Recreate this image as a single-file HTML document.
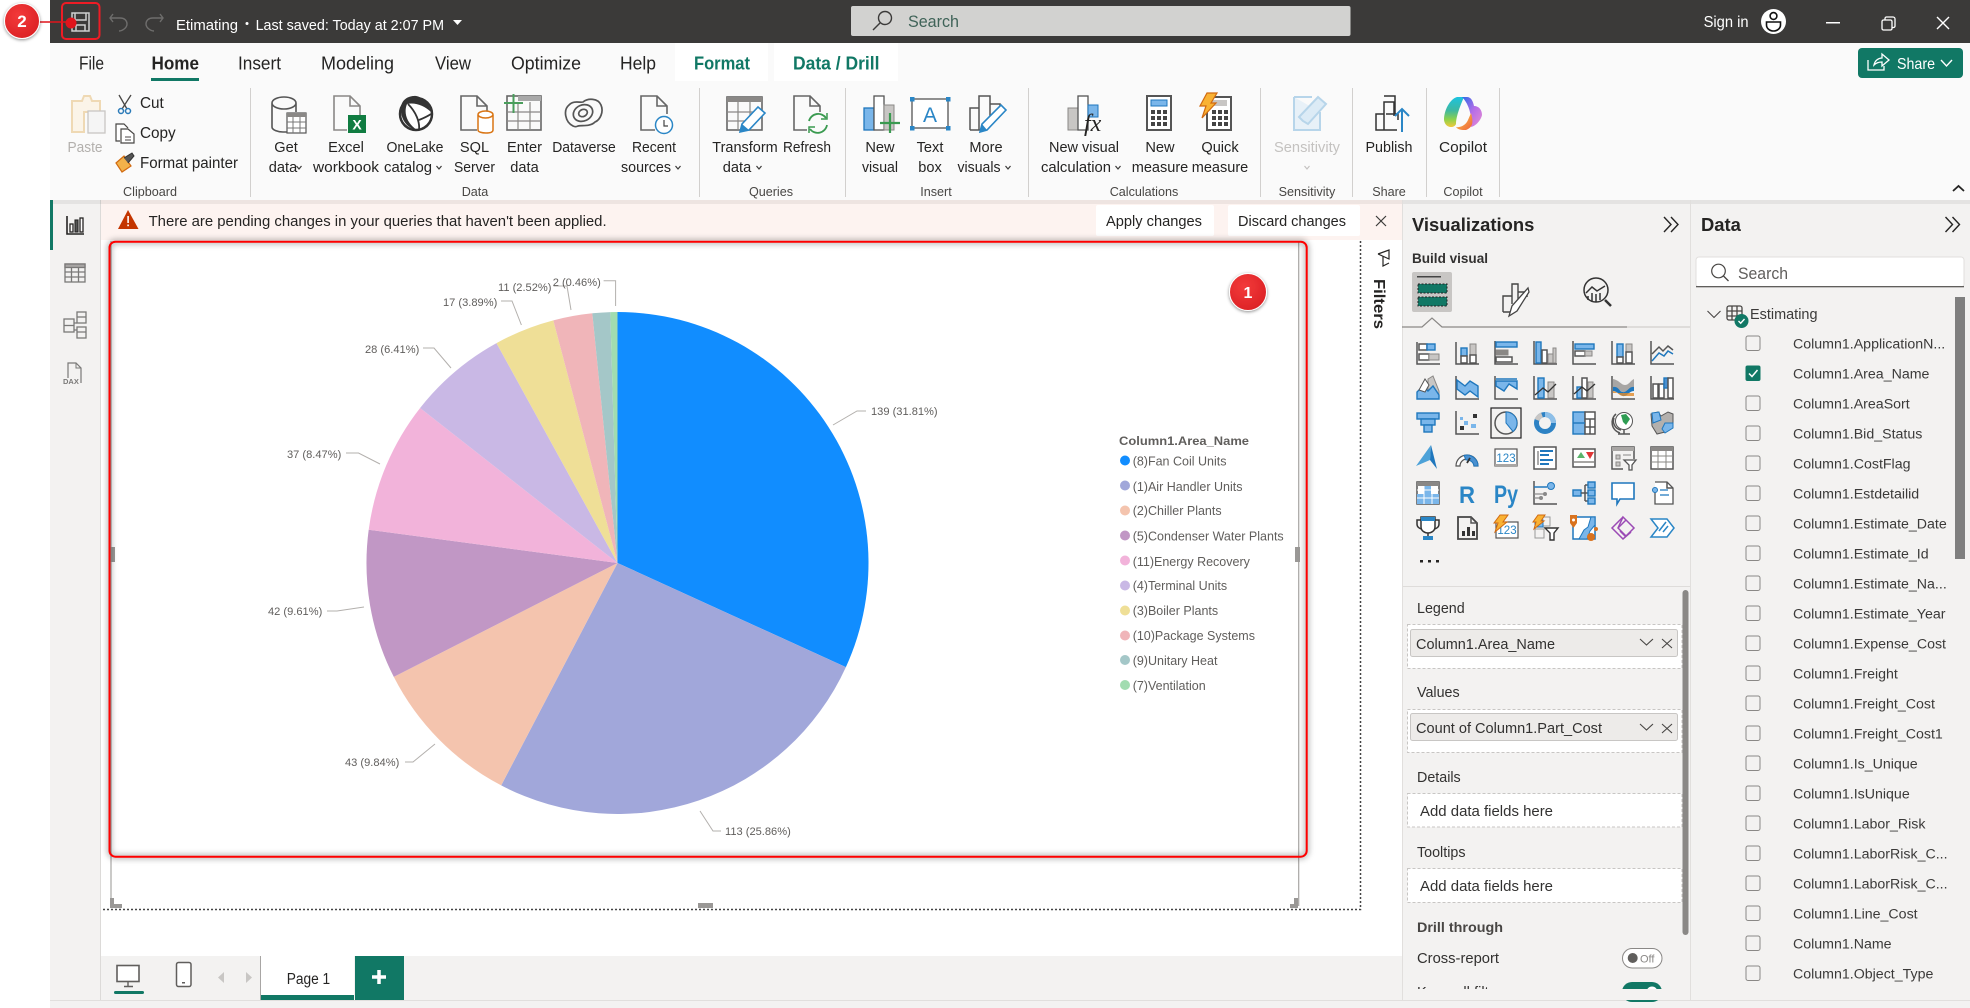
<!DOCTYPE html>
<html lang="en"><head><meta charset="utf-8"><title>Power BI Desktop</title>
<style>
html,body{margin:0;padding:0;background:#fff;width:1970px;height:1008px;overflow:hidden}
svg{display:block}
text{font-family:"Liberation Sans",sans-serif;fill:#252423}
.t{font-size:18px}
.r{font-size:14.6px;text-anchor:middle;fill:#252423}
.g{font-size:12.6px;text-anchor:middle;fill:#484644}
.s{font-size:15.3px}
.d{font-size:14.2px;fill:#3b3a39}
.l{font-size:11.1px;fill:#605e5c}
.e{font-size:12.5px;fill:#605e5c}
.w{font-size:14.3px;fill:#323130}
.k{fill:none;stroke:#555;stroke-width:1.5}
.kw{fill:#fff;stroke:#555;stroke-width:1.5}
.b{fill:#7ab6ea;stroke:#1f77bd;stroke-width:1.4}
.bl{fill:none;stroke:#1f77bd;stroke-width:1.5}
.y{fill:#c8c6c4;stroke:#8a8886;stroke-width:1}
.ld{fill:none;stroke:#b3b0ad;stroke-width:1}
.ch{fill:none;stroke:#3b3a39;stroke-width:1.2}
</style></head>
<body>
<svg width="1970" height="1008" viewBox="0 0 1970 1008" xmlns="http://www.w3.org/2000/svg">
<defs>
<linearGradient id="cp1" x1="0" y1="0" x2="0" y2="1"><stop offset="0" stop-color="#1cc3e0"/><stop offset=".45" stop-color="#3fb8a0"/><stop offset=".75" stop-color="#8fd24a"/><stop offset="1" stop-color="#f2c83c"/></linearGradient>
<linearGradient id="cp2" x1="0" y1="0" x2="1" y2="1"><stop offset="0" stop-color="#2b6be8"/><stop offset=".5" stop-color="#b46ee8"/><stop offset="1" stop-color="#e98bd0"/></linearGradient>
<linearGradient id="cp3" x1="0" y1="0" x2="1" y2="1"><stop offset="0" stop-color="#f7d04a"/><stop offset="1" stop-color="#f0603a"/></linearGradient>
<radialGradient id="rb" cx=".4" cy=".35" r=".8"><stop offset="0" stop-color="#f33a3a"/><stop offset="1" stop-color="#d81e22"/></radialGradient>
<filter id="sh" x="-30%" y="-30%" width="160%" height="160%"><feDropShadow dx="0" dy="1" stdDeviation="1.5" flood-opacity=".45"/></filter>
<filter id="bl" x="-5%" y="-5%" width="110%" height="110%"><feGaussianBlur stdDeviation="3"/></filter>
</defs>

<!-- base -->
<rect width="1970" height="1008" fill="#fff"/>
<rect x="50" y="0" width="1920" height="43" fill="#3b3a39"/>
<rect x="50" y="200" width="1920" height="808" fill="#f3f2f1"/>

<!-- canvas -->
<rect x="101" y="240" width="1260" height="716" fill="#fff"/>
<rect x="1361" y="240" width="41" height="760" fill="#fff"/>
<rect x="100" y="200" width="1" height="800" fill="#dcdad8"/>
<rect x="101" y="200" width="1301" height="40" fill="#fdf3f0"/>

<!-- ribbon -->
<rect x="50" y="43" width="1920" height="157" fill="#fafafa"/>
<rect x="50" y="200" width="1920" height="4" fill="#000" opacity=".06"/>
<rect x="675" y="43" width="93" height="38" fill="#fff"/>
<rect x="774" y="43" width="124" height="38" fill="#fff"/>

<!-- title bar -->
<g fill="none" stroke="#cfcfcf" stroke-width="1.5">
<path d="M72 13H89V31H72Z"/><path d="M75 13V20H86V13"/><path d="M76 31V25H85V31"/>
</g>
<path d="M113 14L110 18L113 22M110 18H120C125 18 127 21 127 24C127 28 122 31 119 31" fill="none" stroke="#6e6d6c" stroke-width="1.4"/>
<path d="M160 14L163 18L160 22M163 18H153C148 18 146 21 146 24C146 28 151 31 154 31" fill="none" stroke="#6e6d6c" stroke-width="1.4"/>
<text x="176" y="30" font-size="14.4" style="fill:#fff" textLength="62" lengthAdjust="spacingAndGlyphs">Etimating</text>
<circle cx="247" cy="23.5" r="1.5" fill="#fff"/>
<text x="255.6" y="30" font-size="14.4" style="fill:#fff" textLength="188.4" lengthAdjust="spacingAndGlyphs">Last saved: Today at 2:07 PM</text>
<path d="M453 20H462L457.5 25Z" fill="#fff"/>
<rect x="851" y="6" width="499.5" height="30" rx="2" fill="#d2d2d0"/>
<circle cx="885" cy="18" r="6.5" fill="none" stroke="#3b3a39" stroke-width="1.4"/><path d="M880 23L873 30" stroke="#3b3a39" stroke-width="1.4"/>
<text x="908" y="27" font-size="17" style="fill:#3f6358" textLength="51" lengthAdjust="spacingAndGlyphs">Search</text>
<text x="1703.6" y="27" font-size="15.4" style="fill:#fff" textLength="45" lengthAdjust="spacingAndGlyphs">Sign in</text>
<circle cx="1773.5" cy="21.5" r="12.5" fill="#fff"/>
<circle cx="1773.5" cy="16" r="3.4" fill="none" stroke="#111" stroke-width="1.6"/>
<path d="M1766.5 22H1780.5V25A7 6 0 0 1 1766.5 25Z" fill="none" stroke="#111" stroke-width="1.6"/>
<rect x="1826" y="22" width="14" height="1.5" fill="#fff"/>
<path d="M1882 21.5a1.5 1.5 0 0 1 1.5-1.5h7a1.5 1.5 0 0 1 1.5 1.5v7a1.5 1.5 0 0 1-1.5 1.5h-7a1.5 1.5 0 0 1-1.5-1.5ZM1885 20v-1.5a1.5 1.5 0 0 1 1.5-1.5h6.5a2 2 0 0 1 2 2v7a1.5 1.5 0 0 1-1.5 1.5H1892" fill="none" stroke="#fff" stroke-width="1.3"/>
<path d="M1937 17L1949 29M1949 17L1937 29" stroke="#fff" stroke-width="1.4"/>

<!-- annotation 2 -->
<rect x="62" y="3" width="37.5" height="36" rx="4" fill="none" stroke="#ee1c25" stroke-width="2"/>
<path d="M30 22H72" stroke="#e0141c" stroke-width="1.6"/>
<circle cx="71" cy="23" r="5.5" fill="#e0141c"/>
<circle cx="22" cy="21" r="17.5" fill="url(#rb)" stroke="#fff" stroke-width="1" filter="url(#sh)"/>
<text x="22" y="27" font-size="17" font-weight="bold" text-anchor="middle" style="fill:#fff">2</text>

<!-- tabs -->
<text class="t" x="79" y="69.500" textLength="25" lengthAdjust="spacingAndGlyphs">File</text>
<text class="t" x="151.500" y="69.500" font-weight="bold" textLength="47.500" lengthAdjust="spacingAndGlyphs">Home</text>
<rect x="151" y="78" width="48" height="3" fill="#117865"/>
<text class="t" x="238" y="69.500" textLength="43" lengthAdjust="spacingAndGlyphs">Insert</text>
<text class="t" x="321" y="69.500" textLength="73" lengthAdjust="spacingAndGlyphs">Modeling</text>
<text class="t" x="435" y="69.500" textLength="36" lengthAdjust="spacingAndGlyphs">View</text>
<text class="t" x="511" y="69.500" textLength="70" lengthAdjust="spacingAndGlyphs">Optimize</text>
<text class="t" x="620" y="69.500" textLength="36" lengthAdjust="spacingAndGlyphs">Help</text>
<text class="t" x="694" y="69.500" font-weight="bold" style="fill:#117865" textLength="56" lengthAdjust="spacingAndGlyphs">Format</text>
<text class="t" x="793" y="69.500" font-weight="bold" style="fill:#117865" textLength="86.500" lengthAdjust="spacingAndGlyphs">Data / Drill</text>

<!-- share -->
<rect x="1858" y="48" width="105" height="30" rx="4" fill="#117865"/>
<path d="M1868 60V70H1884V66M1874 65C1875 60 1879 58 1882 58V54L1889 60L1882 66V62C1878 62 1876 63 1874 65Z" fill="none" stroke="#fff" stroke-width="1.3"/>
<text x="1897" y="69" font-size="15.6" style="fill:#fff" textLength="38" lengthAdjust="spacingAndGlyphs">Share</text>
<path d="M1941 60L1946.5 66L1952 60" fill="none" stroke="#fff" stroke-width="1.4"/>

<!-- separators -->
<g fill="#d2d0ce">
<rect x="250" y="88" width="1" height="109"/><rect x="699" y="88" width="1" height="109"/><rect x="845" y="88" width="1" height="109"/><rect x="1028" y="88" width="1" height="109"/><rect x="1260" y="88" width="1" height="109"/><rect x="1352" y="88" width="1" height="109"/><rect x="1426" y="88" width="1" height="109"/><rect x="1499" y="88" width="1" height="109"/>
</g>
<path d="M1953 191L1958.5 186L1964 191" fill="none" stroke="#252423" stroke-width="1.8"/>

<!-- ribbon labels -->
<text class="r" x="85" y="152" style="fill:#b3b0ad" textLength="35" lengthAdjust="spacingAndGlyphs">Paste</text>
<text class="s" x="140" y="108">Cut</text>
<text class="s" x="140" y="138">Copy</text>
<text class="s" x="140" y="168" textLength="98" lengthAdjust="spacingAndGlyphs">Format painter</text>
<text class="r" x="286" y="152">Get</text><text class="r" x="283" y="172">data</text>
<text class="r" x="346" y="152">Excel</text><text class="r" x="346" y="172" textLength="66" lengthAdjust="spacingAndGlyphs">workbook</text>
<text class="r" x="415" y="152" textLength="57" lengthAdjust="spacingAndGlyphs">OneLake</text><text class="r" x="408" y="172" textLength="48" lengthAdjust="spacingAndGlyphs">catalog</text>
<text class="r" x="474.500" y="152">SQL</text><text class="r" x="474.500" y="172" textLength="41" lengthAdjust="spacingAndGlyphs">Server</text>
<text class="r" x="524.500" y="152">Enter</text><text class="r" x="524.500" y="172">data</text>
<text class="r" x="584" y="152" textLength="63.500" lengthAdjust="spacingAndGlyphs">Dataverse</text>
<text class="r" x="654" y="152" textLength="44" lengthAdjust="spacingAndGlyphs">Recent</text><text class="r" x="646" y="172" textLength="50" lengthAdjust="spacingAndGlyphs">sources</text>
<text class="r" x="745" y="152" textLength="65.500" lengthAdjust="spacingAndGlyphs">Transform</text><text class="r" x="737" y="172">data</text>
<text class="r" x="807" y="152" textLength="48" lengthAdjust="spacingAndGlyphs">Refresh</text>
<text class="r" x="880" y="152">New</text><text class="r" x="880" y="172" textLength="36" lengthAdjust="spacingAndGlyphs">visual</text>
<text class="r" x="930" y="152">Text</text><text class="r" x="930" y="172">box</text>
<text class="r" x="986" y="152">More</text><text class="r" x="979" y="172" textLength="43" lengthAdjust="spacingAndGlyphs">visuals</text>
<text class="r" x="1084" y="152" textLength="70" lengthAdjust="spacingAndGlyphs">New visual</text><text class="r" x="1076" y="172" textLength="70" lengthAdjust="spacingAndGlyphs">calculation</text>
<text class="r" x="1160" y="152">New</text><text class="r" x="1160" y="172" textLength="56.500" lengthAdjust="spacingAndGlyphs">measure</text>
<text class="r" x="1220" y="152">Quick</text><text class="r" x="1220" y="172" textLength="56.500" lengthAdjust="spacingAndGlyphs">measure</text>
<text class="r" x="1307" y="152" style="fill:#c4c2c0" textLength="66" lengthAdjust="spacingAndGlyphs">Sensitivity</text>
<text class="r" x="1389" y="152" textLength="47" lengthAdjust="spacingAndGlyphs">Publish</text>
<text class="r" x="1463" y="152" textLength="48" lengthAdjust="spacingAndGlyphs">Copilot</text>
<path class="ch" d="M296.500 166L299 169L301.500 166M436.500 166L439 169L441.500 166M675.500 166L678 169L680.500 166M756.500 166L759 169L761.500 166M1005.500 166L1008 169L1010.500 166M1115.500 166L1118 169L1120.500 166"/>
<path d="M1304.500 166L1307 169L1309.500 166" fill="none" stroke="#c4c2c0" stroke-width="1.2"/>
<text class="g" x="150" y="196">Clipboard</text>
<text class="g" x="475" y="196">Data</text>
<text class="g" x="771" y="196">Queries</text>
<text class="g" x="936" y="196">Insert</text>
<text class="g" x="1144" y="196">Calculations</text>
<text class="g" x="1307" y="196">Sensitivity</text>
<text class="g" x="1389" y="196">Share</text>
<text class="g" x="1463" y="196">Copilot</text>

<!-- ribbon icons -->
<!-- paste -->
<path d="M72 101H82L84 96H90L92 101H100V112H84V132H72Z" fill="#fbf4e8" stroke="#efd9b4" stroke-width="2"/>
<rect x="88" y="111" width="17" height="22" fill="#f5f5f5" stroke="#c8c6c4" stroke-width="1.3"/>
<!-- cut -->
<path d="M119 95L127 109M131 95L122 109" stroke="#484644" stroke-width="1.3" fill="none"/>
<circle cx="121" cy="111" r="2.500" fill="none" stroke="#2a7ab8" stroke-width="1.500"/><circle cx="128" cy="111" r="2.500" fill="none" stroke="#2a7ab8" stroke-width="1.500"/>
<!-- copy -->
<path d="M120 141H116V124H124L128 128M121 143V129H128L134 134V143Z" fill="#fff" stroke="#484644" stroke-width="1.2"/><path d="M125 137H131M125 140H131" stroke="#484644"/>
<!-- format painter -->
<path d="M116 163L124 156L131 166L122 172Z" fill="#f3b24a" stroke="#d16a10" stroke-width="1.2"/>
<path d="M124 158L132 153L134 156L128 163" fill="#555" stroke="#333"/>
<!-- get data -->
<path d="M272 103V127C272 130 278 132 283 132H287M296 112V103M272 103A12 6 0 0 1 296 103A12 6 0 0 1 272 103Z" fill="none" stroke="#555" stroke-width="1.6"/>
<rect x="287" y="113" width="19" height="20" fill="#fff" stroke="#555" stroke-width="1.2"/><rect x="287" y="113" width="19" height="4" fill="#8a8886"/><path d="M293 117V133M300 117V133M287 122H306M287 128H306" stroke="#777" stroke-width="1"/>
<!-- excel -->
<path d="M347 130H334V96H350L360 106V115M350 96V106H360" fill="none" stroke="#8a8886" stroke-width="1.6"/>
<rect x="348" y="115" width="18" height="18" fill="#107c41"/><text x="357" y="129.500" font-size="14" font-weight="bold" text-anchor="middle" style="fill:#fff">X</text>
<!-- onelake -->
<circle cx="416" cy="114" r="16" fill="#fff" stroke="#333" stroke-width="2.500"/>
<path d="M401 107C402 99 409 96 414 96C420 95 429 103 431 112C425 106 415 102 407 104C403 114 408 124 417 130C406 128 400 118 401 107Z" fill="#333"/><path d="M408 104C416 112 420 122 419 130M419 120C424 118 428 116 431 114" fill="none" stroke="#333" stroke-width="1.800"/>
<!-- sql -->
<path d="M477 130H461V96H477L487 106V111M477 96V106H487" fill="none" stroke="#666" stroke-width="1.600"/>
<path d="M478 115V130C478 132 482 133 486 133C490 133 493 132 493 130V115" fill="#fff" stroke="#d97514" stroke-width="1.500"/><ellipse cx="485.500" cy="114.500" rx="7.500" ry="3.500" fill="#fff" stroke="#d97514" stroke-width="1.500"/>
<!-- enter data -->
<rect x="507" y="96" width="34" height="34" fill="none" stroke="#666" stroke-width="1.600"/><rect x="518" y="96" width="23" height="5" fill="#a8a8a8"/>
<path d="M507 112H541M507 121H541M518 102V130M530 102V130" stroke="#8a8886" stroke-width="1.200"/>
<path d="M504 103H523M513.500 94V113" stroke="#4a9e5c" stroke-width="2"/>
<!-- dataverse -->
<g fill="none" stroke="#555" stroke-width="1.700"><path d="M573 126C565 122 563 110 569 105C574 100 580 103 583 102C588 98 598 98 601 105C604 112 600 120 595 122C590 127 582 125 578 126C576 127 575 127 573 126Z"/><ellipse cx="583" cy="113" rx="10" ry="8" transform="rotate(-25 583 113)"/><ellipse cx="583" cy="113" rx="4.500" ry="3.500" transform="rotate(-25 583 113)"/></g>
<!-- recent -->
<path d="M655 130H641V96H657L667 106V114M657 96V106H667" fill="none" stroke="#666" stroke-width="1.600"/>
<circle cx="664" cy="125" r="8.500" fill="#fff" stroke="#2a86c6" stroke-width="1.500"/><path d="M664 120V126H668" fill="none" stroke="#444" stroke-width="1.200"/>
<!-- transform -->
<rect x="727" y="97" width="35" height="33" fill="none" stroke="#666" stroke-width="1.600"/><rect x="727" y="97" width="35" height="5" fill="#8a8886"/><path d="M727 112H762M727 121H752M738 102V130M750 102V125" stroke="#8a8886" stroke-width="1.200"/>
<path d="M740 132L742 124L758 107L765 113L749 130Z" fill="#fff" stroke="#2a86c6" stroke-width="1.600"/><path d="M740 132L742 124L749 130Z" fill="#2a86c6"/>
<!-- refresh -->
<path d="M807 130H794V96H810L820 106V112M810 96V106H820" fill="none" stroke="#666" stroke-width="1.600"/>
<path d="M809 121A9.500 9.500 0 0 1 826 118M827 125A9.500 9.500 0 0 1 810 129" fill="none" stroke="#3a9a50" stroke-width="1.800"/><path d="M827 113V119H821M809 133V127H815" fill="none" stroke="#3a9a50" stroke-width="1.500"/>
<!-- new visual -->
<rect x="864" y="108" width="10" height="22" fill="#7ab6ea" stroke="#1f77bd" stroke-width="1.300"/>
<rect x="874" y="96" width="10" height="34" fill="#fff" stroke="#555" stroke-width="1.300"/><rect x="884" y="105" width="10" height="25" fill="#c8c6c4" stroke="#8a8886"/>
<path d="M880 123H900M890 113V133" stroke="#3a9a50" stroke-width="2.200"/>
<!-- text box -->
<rect x="912" y="99" width="36" height="29" fill="#fff" stroke="#555" stroke-width="1.300"/>
<g fill="#2a86c6"><rect x="910" y="97" width="4.500" height="4.500"/><rect x="946" y="97" width="4.500" height="4.500"/><rect x="910" y="126" width="4.500" height="4.500"/><rect x="946" y="126" width="4.500" height="4.500"/></g>
<text x="930" y="122" font-size="21" text-anchor="middle" style="fill:#2a86c6">A</text>
<!-- more visuals -->
<path d="M970 130V108H979V96H990V104H1000V113M979 108V130H970M979 130H985M990 104V118" fill="none" stroke="#555" stroke-width="1.500"/>
<path d="M980 132L982 124L1001 105L1006 110L987 130Z" fill="#fff" stroke="#2a86c6" stroke-width="1.600"/><path d="M980 132L982 124L987 130Z" fill="#2a86c6"/>
<!-- new visual calc -->
<rect x="1068" y="108" width="10" height="22" fill="#c8c6c4" stroke="#8a8886"/><rect x="1078" y="96" width="10" height="34" fill="#fff" stroke="#555" stroke-width="1.300"/><rect x="1088" y="105" width="10" height="12" fill="#7ab6ea" stroke="#1f77bd"/>
<text x="1084" y="131" font-style="italic" font-size="24" style="font-family:'Liberation Serif',serif;fill:#252423">fx</text>
<!-- new measure -->
<rect x="1147" y="96" width="24" height="34" fill="#fff" stroke="#555" stroke-width="2"/><rect x="1151" y="100" width="16" height="6" fill="#7ab6ea" stroke="#1f77bd"/>
<g fill="#444"><rect x="1151" y="110" width="4" height="4"/><rect x="1157" y="110" width="4" height="4"/><rect x="1163" y="110" width="4" height="4"/><rect x="1151" y="116" width="4" height="4"/><rect x="1157" y="116" width="4" height="4"/><rect x="1163" y="116" width="4" height="4"/><rect x="1151" y="122" width="4" height="4"/><rect x="1157" y="122" width="4" height="4"/><rect x="1163" y="122" width="4" height="4"/></g>
<!-- quick measure -->
<rect x="1207" y="97" width="24" height="33" fill="#fff" stroke="#555" stroke-width="2"/><rect x="1211" y="100" width="16" height="6" fill="#c8c6c4"/>
<g fill="#444"><rect x="1212" y="110" width="4" height="4"/><rect x="1218" y="110" width="4" height="4"/><rect x="1224" y="110" width="4" height="4"/><rect x="1212" y="116" width="4" height="4"/><rect x="1218" y="116" width="4" height="4"/><rect x="1224" y="116" width="4" height="4"/><rect x="1212" y="122" width="4" height="4"/><rect x="1218" y="122" width="4" height="4"/><rect x="1224" y="122" width="4" height="4"/></g>
<path d="M1207 93H1217L1211 103H1216L1202 118L1206 106H1200Z" fill="#f9b233" stroke="#d16a10" stroke-width="1.200"/>
<!-- sensitivity -->
<path d="M1294 97H1312M1294 97V130H1320V112" fill="#e8f1f8" stroke="#b7d5ea" stroke-width="2"/>
<path d="M1303 121L1299 117L1318 97L1326 104L1308 124Z" fill="#dcebf6" stroke="#b7d5ea" stroke-width="2"/>
<!-- publish -->
<path d="M1378 130H1376V114H1384V102H1394V116M1384 114V130H1378M1384 96H1395V114M1386 114H1398V120M1384 130H1397" fill="none" stroke="#333" stroke-width="1.500"/>
<path d="M1402 132V109M1395 116L1402 109L1409 116" fill="none" stroke="#2a86c6" stroke-width="2"/>
<!-- copilot -->
<path d="M1444 120C1444 110 1450 99 1457 97H1464C1461 104 1456 116 1456 124C1454 129 1445 128 1444 120Z" fill="url(#cp1)"/>
<path d="M1462 97H1467C1471 97 1473 101 1474 106C1479 106 1482 110 1482 115C1481 120 1476 126 1471 127C1472 118 1470 105 1462 97Z" fill="url(#cp2)"/>
<path d="M1456 127C1460 128 1466 125 1468 120L1471 113C1473 120 1474 127 1466 130C1462 130 1458 130 1456 127Z" fill="url(#cp3)"/>

<!-- left rail -->
<rect x="50" y="200" width="3" height="50" fill="#117865"/>
<g transform="translate(75,225)"><path d="M-8-9V9H9" fill="none" stroke="#252423" stroke-width="1.600"/><rect x="-5" y="-1" width="3" height="8" fill="#fff" stroke="#252423" stroke-width="1.300"/><rect x="0" y="-5" width="3" height="12" fill="#555" stroke="#252423" stroke-width="1.100"/><rect x="5" y="-7" width="3" height="14" fill="#fff" stroke="#252423" stroke-width="1.300"/></g>
<g transform="translate(75,273)" fill="none" stroke="#7a7978" stroke-width="1.300"><rect x="-10" y="-9" width="20" height="18"/><rect x="-10" y="-9" width="20" height="3.500" fill="#a8a6a4"/><path d="M-10-1H10M-10 4H10M-3.500-6V9M3.500-6V9"/></g>
<g transform="translate(75,325)" fill="#f3f2f1" stroke="#7a7978" stroke-width="1.300"><rect x="-11" y="-6" width="10" height="13"/><path d="M-11 .5H-1"/><rect x="2" y="-13" width="9" height="11"/><path d="M2-8H11"/><rect x="2" y="2" width="9" height="11"/><path d="M2 7H11M-1-2H2M-1 5H2"/></g>
<g transform="translate(75,375)"><path d="M-7 3V-12H1L6-7V8" fill="none" stroke="#7a7978" stroke-width="1.200"/><path d="M1-12V-7H6" fill="none" stroke="#7a7978" stroke-width="1"/><text x="-12" y="9" font-size="7.500" font-weight="bold" style="fill:#7a7978">DAX</text></g>

<!-- warning bar -->
<path d="M128 210L138.500 229H118Z" fill="#c43500"/><rect x="127.300" y="216" width="1.600" height="7" fill="#fff"/><rect x="127.300" y="224.500" width="1.600" height="1.700" fill="#fff"/>
<text x="148.600" y="226" font-size="15" textLength="458" lengthAdjust="spacingAndGlyphs">There are pending changes in your queries that haven't been applied.</text>
<rect x="1096" y="205" width="118" height="31" rx="2" fill="#fff"/>
<rect x="1228" y="205" width="132" height="31" rx="2" fill="#fff"/>
<text x="1106" y="226" font-size="15" textLength="96" lengthAdjust="spacingAndGlyphs">Apply changes</text>
<text x="1238" y="226" font-size="15" textLength="108" lengthAdjust="spacingAndGlyphs">Discard changes</text>
<path d="M1376 216L1386 226M1386 216L1376 226" stroke="#3b3a39" stroke-width="1.200"/>

<!-- visual selection frame -->
<path d="M111 241V906M1298.700 241V906" stroke="#a8a6a4" stroke-width="1.200" fill="none"/>
<path d="M103 909.500H1360.500V240" stroke="#444" stroke-width="1.500" stroke-dasharray="2 2" fill="none"/>
<g fill="#9a9896"><path d="M110 898H114V904H122V908H110Z"/><rect x="110" y="547" width="5" height="15"/><rect x="1295" y="547" width="5" height="15"/><rect x="698" y="903" width="15" height="5"/><path d="M1298 898V908H1290V904H1294V898Z"/></g>

<!-- pie -->
<g>
<path d="M617.500 563V312A251 251 0 0 1 845.900 667.100Z" fill="#118dff"/>
<path d="M617.500 563L845.900 667.100A251 251 0 0 1 501.200 785.400Z" fill="#a1a7da"/>
<path d="M617.500 563L501.200 785.400A251 251 0 0 1 393.800 676.900Z" fill="#f4c4ae"/>
<path d="M617.500 563L393.800 676.900A251 251 0 0 1 368.700 529.700Z" fill="#c197c5"/>
<path d="M617.500 563L368.700 529.700A251 251 0 0 1 420.100 408Z" fill="#f2b3da"/>
<path d="M617.500 563L420.100 408A251 251 0 0 1 496.500 343.100Z" fill="#c9b8e5"/>
<path d="M617.500 563L496.500 343.100A251 251 0 0 1 553.300 320.400Z" fill="#efdf97"/>
<path d="M617.500 563L553.300 320.400A251 251 0 0 1 592.300 313.300Z" fill="#f0b5b9"/>
<path d="M617.500 563L592.300 313.300A251 251 0 0 1 610.300 312.100Z" fill="#a4c7c8"/>
<path d="M617.500 563L610.300 312.100A251 251 0 0 1 617.500 312Z" fill="#a1dcb0"/>
</g>
<path class="ld" d="M833 425L857 411H866"/><path class="ld" d="M700 811L713 831H721"/><path class="ld" d="M435 744L413 762H405"/><path class="ld" d="M364 607L337 611H327"/><path class="ld" d="M346 453H358.500L380 464"/><path class="ld" d="M423 348H434L451 368"/><path class="ld" d="M501 301H512L521.400 325"/><path class="ld" d="M553.600 286H567L571 310"/><path class="ld" d="M603.600 280.700H615.600V306"/>
<text class="l" x="871" y="415">139 (31.81%)</text>
<text class="l" x="725" y="835">113 (25.86%)</text>
<text class="l" x="345" y="766">43 (9.84%)</text>
<text class="l" x="268" y="615">42 (9.61%)</text>
<text class="l" x="287" y="458">37 (8.47%)</text>
<text class="l" x="365" y="353">28 (6.41%)</text>
<text class="l" x="443" y="306">17 (3.89%)</text>
<text class="l" x="498" y="291">11 (2.52%)</text>
<text class="l" x="552.700" y="286">2 (0.46%)</text>

<!-- legend -->
<text x="1119" y="445" font-size="12.400" font-weight="bold" style="fill:#605e5c" textLength="130" lengthAdjust="spacingAndGlyphs">Column1.Area_Name</text>
<circle cx="1125" cy="460.500" r="5" fill="#118dff"/><text class="e" x="1132.700" y="465.500">(8)Fan Coil Units</text>
<circle cx="1125" cy="485.500" r="5" fill="#a1a7da"/><text class="e" x="1132.700" y="491">(1)Air Handler Units</text>
<circle cx="1125" cy="510.500" r="5" fill="#f4c4ae"/><text class="e" x="1132.700" y="515">(2)Chiller Plants</text>
<circle cx="1125" cy="535.500" r="5" fill="#c197c5"/><text class="e" x="1132.700" y="540.500">(5)Condenser Water Plants</text>
<circle cx="1125" cy="560.500" r="5" fill="#f2b3da"/><text class="e" x="1132.700" y="566">(11)Energy Recovery</text>
<circle cx="1125" cy="585.500" r="5" fill="#c9b8e5"/><text class="e" x="1132.700" y="590">(4)Terminal Units</text>
<circle cx="1125" cy="610.500" r="5" fill="#efdf97"/><text class="e" x="1132.700" y="615">(3)Boiler Plants</text>
<circle cx="1125" cy="635.500" r="5" fill="#f0b5b9"/><text class="e" x="1132.700" y="640">(10)Package Systems</text>
<circle cx="1125" cy="660" r="5" fill="#a4c7c8"/><text class="e" x="1132.700" y="665">(9)Unitary Heat</text>
<circle cx="1125" cy="685" r="5" fill="#a1dcb0"/><text class="e" x="1132.700" y="690">(7)Ventilation</text>

<!-- annotation 1 -->
<rect x="109.500" y="241.700" width="1197.200" height="615" rx="6" fill="none" stroke="#000" stroke-opacity=".28" stroke-width="5" filter="url(#bl)"/>
<rect x="109.500" y="241.700" width="1197.200" height="615" rx="6" fill="none" stroke="#f00" stroke-width="2"/>
<circle cx="1248" cy="292" r="18.500" fill="url(#rb)" stroke="#fff" stroke-width="1" filter="url(#sh)"/>
<text x="1248" y="298" font-size="16" font-weight="bold" text-anchor="middle" style="fill:#fff">1</text>

<!-- filters -->
<path d="M1378 254L1389 259V250L1378 254M1383 256V266L1389 263" fill="none" stroke="#252423" stroke-width="1.200"/>
<text transform="translate(1374,279) rotate(90)" font-size="15.500" font-weight="bold" textLength="50" lengthAdjust="spacingAndGlyphs">Filters</text>

<!-- bottom tabs -->
<rect x="101" y="956" width="1301" height="44" fill="#f3f2f1"/>
<rect x="117" y="965.500" width="22" height="16" fill="#fff" stroke="#605e5c" stroke-width="1.600"/><path d="M128 982V986M124 986.500H133" stroke="#605e5c" stroke-width="1.400"/>
<rect x="114" y="991" width="30" height="3" rx="1.500" fill="#117865"/>
<rect x="176.500" y="962.500" width="14.500" height="24" rx="2" fill="#fff" stroke="#605e5c" stroke-width="1.500"/><rect x="182" y="982" width="3" height="1.500" fill="#605e5c"/>
<path d="M224 972V983L218 977.500Z" fill="#c8c6c4"/><path d="M246 972V983L252 977.500Z" fill="#c8c6c4"/>
<rect x="260" y="956" width="94" height="44" fill="#fff"/><rect x="260" y="956" width="1" height="44" fill="#a8a6a4"/><rect x="261" y="995" width="93" height="5" fill="#117865"/>
<text x="286.700" y="984" font-size="15.500" textLength="43.500" lengthAdjust="spacingAndGlyphs">Page 1</text>
<rect x="355" y="956" width="49" height="44" fill="#117865"/><path d="M372 977H386M379 970V984" stroke="#fff" stroke-width="3.500"/>
<rect x="50" y="1000" width="1920" height="1" fill="#e1dfdd"/>

<!-- visualizations panel -->
<rect x="1402" y="200" width="1" height="800" fill="#e1dfdd"/>
<rect x="1690" y="200" width="1" height="800" fill="#e1dfdd"/>
<text x="1412" y="231" font-size="18.400" font-weight="bold" style="fill:#252423">Visualizations</text>
<path d="M1664 217L1671 224.500L1664 232M1671 217L1678 224.500L1671 232" fill="none" stroke="#252423" stroke-width="1.400"/>
<text x="1412" y="263" font-size="14" font-weight="bold" style="fill:#323130" textLength="76" lengthAdjust="spacingAndGlyphs">Build visual</text>
<rect x="1412" y="272" width="40" height="40" rx="2" fill="#c8c6c4"/>
<rect x="1417" y="276" width="24" height="1.500" fill="#444"/>
<rect x="1418" y="284" width="29" height="9" fill="#117865" stroke="#222" stroke-width="1" stroke-dasharray="2 1.500"/>
<rect x="1418" y="297" width="29" height="9" fill="#117865" stroke="#222" stroke-width="1" stroke-dasharray="2 1.500"/>
<g fill="none" stroke="#444" stroke-width="1.400"><path d="M1503 312V296H1512V304M1512 296V284H1518V302M1518 292H1527V297M1503 312H1510"/></g><path d="M1509 316L1512 306L1528 288L1529 292L1517 311Z" fill="#fff" stroke="#444" stroke-width="1.300"/>
<g fill="none" stroke="#333" stroke-width="1.500"><circle cx="1596" cy="290" r="12"/><path d="M1605 300L1611 306" stroke-width="2.500"/><path d="M1586 293L1592 287L1597 291L1605 286"/><path d="M1588 296V300M1592 293V301M1596 294V302M1600 293V300"/></g>
<path d="M1402 327H1422L1432 318L1442 327H1627" fill="none" stroke="#8a8886" stroke-width="1.200"/>
<rect x="1627" y="326.500" width="63" height="1" fill="#c8c6c4"/>

<!-- viz grid -->
<g transform="translate(1428,353)"><path class="k" d="M-11-11V11H12"/><rect class="kw" x="-9" y="-9" width="8" height="6"/><rect class="b" x="-1" y="-9" width="8" height="6"/><rect class="kw" x="-9" y="1" width="10" height="6"/><rect class="y" x="1" y="1" width="10" height="6"/></g>
<g transform="translate(1467,353)"><path class="k" d="M-11-11V11H12"/><rect class="b" x="-6" y="-5" width="6" height="8"/><rect class="kw" x="-6" y="3" width="6" height="7"/><rect class="y" x="3" y="-9" width="6" height="11"/><rect class="kw" x="3" y="2" width="6" height="8"/></g>
<g transform="translate(1506,353)"><path class="k" d="M-11-12V11H12"/><rect class="b" x="-10" y="-11" width="21" height="5"/><rect class="y" x="-10" y="-3" width="12" height="5" style="fill:#8a8886"/><rect class="kw" x="-10" y="4" width="16" height="5"/></g>
<g transform="translate(1545,353)"><path class="k" d="M-11-12V11H12"/><rect class="b" x="-9" y="-11" width="5" height="21"/><rect class="kw" x="-3" y="-3" width="5" height="13"/><rect class="y" x="3" y="1" width="5" height="9"/><rect class="y" x="8" y="-5" width="3" height="15"/></g>
<g transform="translate(1584,353)"><path class="k" d="M-11-12V11H12"/><rect class="b" x="-9" y="-9" width="19" height="5"/><rect class="kw" x="-9" y="-2" width="10" height="5"/><rect class="y" x="1" y="-2" width="7" height="5"/></g>
<g transform="translate(1623,353)"><path class="k" d="M-11-12V11H12"/><rect class="b" x="-6" y="-9" width="6" height="13"/><rect class="kw" x="-6" y="4" width="6" height="6"/><rect class="y" x="3" y="-9" width="6" height="8"/><rect class="kw" x="3" y="-1" width="6" height="11"/></g>
<g transform="translate(1662,353)"><path class="k" d="M-11-12V11H12"/><path class="k" d="M-10 1L-3-6L1-2L6-7L11-3"/><path class="bl" d="M-10 8L-3 0L2 3L6-2L11 1"/></g>

<g transform="translate(1428,388)"><path class="y" d="M0-9L5-12L11 3V11H0Z"/><path class="b" d="M-11 11V4L-5-2L0 3L5-2L11 7V11Z"/><path d="M-9 2L-3-9L1-3L-3 4Z" fill="#fff" stroke="#555"/></g>
<g transform="translate(1467,388)"><path class="k" d="M-11-12V11H12"/><path class="b" d="M-10-8L-2-2L3-7L11-2V9L3 3L-2 7L-10 1Z"/></g>
<g transform="translate(1506,388)"><path class="k" d="M-11-12V11H12"/><path class="b" d="M-10-7H11V1L3-4L-2 3L-10-2Z"/><path d="M-10-9H11" stroke="#1f77bd" stroke-width="1.500"/></g>
<g transform="translate(1545,388)"><path class="k" d="M-11-12V11H12"/><rect class="b" x="-7" y="-10" width="6" height="20"/><rect class="y" x="3" y="-6" width="6" height="16"/><path d="M-10 7L-2 0L3 4L11-4" fill="none" stroke="#333" stroke-width="1.300"/></g>
<g transform="translate(1584,388)"><path class="k" d="M-11-12V11H12"/><rect class="b" x="-7" y="-1" width="6" height="11"/><rect class="kw" x="-2" y="-10" width="5" height="20"/><rect class="y" x="4" y="-6" width="5" height="16"/><path d="M-10 6L-2-1L3 3L11-4" fill="none" stroke="#333" stroke-width="1.300"/></g>
<g transform="translate(1623,388)"><path class="k" d="M-11-12V11H12"/><path d="M-10-9C-4-8-2-3 2-3C6-3 8-8 11-9V-1C6 0 4 5 0 4C-4 3-6-1-10-1Z" fill="#a8a6a4"/><path d="M-10-1C-4-2-4 4 0 4C4 5 6-2 11-1V3C6 3 4 9 0 8C-4 7-6 3-10 3Z" fill="#1f77bd"/><path d="M-10 3C-6 3-4 8 0 8H11V5H-10Z" fill="#e08a2a" opacity=".8"/></g>
<g transform="translate(1662,388)"><path class="k" d="M-11-12V11H12"/><rect class="kw" x="-9" y="-4" width="5" height="14"/><rect class="kw" x="-3" y="-4" width="5" height="14"/><rect class="b" x="2" y="-10" width="4" height="10" style="fill:#4a90d0"/><rect class="kw" x="6" y="-10" width="5" height="20"/></g>

<g transform="translate(1428,423)"><rect class="b" x="-11" y="-10" width="22" height="6"/><rect class="b" x="-7" y="-4" width="14" height="6"/><rect class="b" x="-4" y="2" width="8" height="7"/></g>
<g transform="translate(1467,423)"><path class="k" d="M-11-12V11H12"/><rect x="-7" y="-6" width="3" height="3" fill="#7ab6ea"/><rect x="-3" y="-2" width="4" height="4" fill="#7ab6ea"/><rect x="6" y="-9" width="4" height="4" fill="#333"/><rect x="-7" y="3" width="4" height="4" fill="#333"/><rect x="4" y="1" width="5" height="4" fill="#7ab6ea"/></g>
<rect x="1491" y="408" width="30" height="30" fill="none" stroke="#222" stroke-width="1.200"/>
<g transform="translate(1506,423)"><circle r="11" fill="#f3f2f1" stroke="#555" stroke-width="1.500"/><path d="M0 0V-11A11 11 0 0 1 7 8.500Z" fill="#7ab6ea" stroke="#1f77bd"/></g>
<g transform="translate(1545,423)"><circle r="8.500" fill="none" stroke="#2d82c4" stroke-width="5"/><path d="M0-8.500A8.500 8.500 0 0 1 8.500 0" fill="none" stroke="#8dbfe8" stroke-width="5"/><path d="M-8-3A8.500 8.500 0 0 1-3-8" fill="none" stroke="#c8c6c4" stroke-width="5"/></g>
<g transform="translate(1584,423)"><rect class="b" x="-11" y="-11" width="12" height="22"/><rect class="kw" x="1" y="-11" width="10" height="22"/><path class="b" d="M-11 0H1"/><path class="k" d="M1-4H11M6-4V11M1 4H11"/></g>
<g transform="translate(1623,423)"><path class="k" d="M-2 7A9 9 0 0 1-9-5M-7-9A11 11 0 0 0-3 10"/><circle cx="1" cy="-2" r="8.500" fill="#fff" stroke="#555"/><path d="M-2-8L3-9L7-4L3 2L0-1Z" fill="#2e9c52"/><path d="M-5 11H7M1 7V11" stroke="#555" stroke-width="1.500"/></g>
<g transform="translate(1662,423)"><path d="M-11-9L-4-11L-1-7L6-11L11-9V3L3 9L-5 11L-10 3Z" fill="#b3b0ad" stroke="#555"/><path d="M-10-10L-3-11L-1-3L-9 0Z" fill="#7ab6ea" stroke="#1f77bd"/><path d="M3 0H11V5L3 10L0 6Z" fill="#7ab6ea" stroke="#1f77bd"/></g>

<g transform="translate(1428,458)"><path d="M3-13L-12 8L2 2Z" fill="#4da2d8"/><path d="M3-13L2 2L9 11Z" fill="#1f77bd"/></g>
<g transform="translate(1467,458)"><path d="M-11 8A11 11 0 0 1 11 8H7A7 7 0 0 0-7 8Z" fill="#fff" stroke="#555" stroke-width="1.200"/><path d="M-3-2.500A11 11 0 0 1 11 8H7A7 7 0 0 0-1 2Z" fill="#4a90d0" stroke="#1f77bd"/><path d="M0 5L3 0" stroke="#333" stroke-width="1.800"/></g>
<g transform="translate(1506,458)"><rect x="-11" y="-9" width="22" height="17" fill="#fff" stroke="#555" stroke-width="1.200"/><text x="0" y="4" font-size="11.500" text-anchor="middle" style="fill:#2a86c6">123</text><rect x="-11" y="6" width="22" height="3" fill="#a8a6a4"/></g>
<g transform="translate(1545,458)"><rect class="kw" x="-11" y="-11" width="22" height="22"/><path d="M-7-7V7" stroke="#555"/><path d="M-5-7H8M-5-3H4M-5 2H8M-5 6H4" stroke="#1f77bd" stroke-width="2"/></g>
<g transform="translate(1584,458)"><rect class="kw" x="-11" y="-9" width="22" height="18"/><path d="M-7 0L-3-6L1 0Z" fill="#59b36a"/><path d="M2-6H10L6 1Z" fill="#e03535"/><path d="M-10 4H10" stroke="#8a8886" stroke-width="1.500"/></g>
<g transform="translate(1623,458)"><path class="k" d="M0 11H-11V-11H11V1"/><rect x="-11" y="-11" width="22" height="4" fill="#a8a6a4"/><rect class="y" x="-7" y="-3" width="4" height="4"/><rect class="y" x="-7" y="4" width="4" height="4"/><path d="M0-3H8" stroke="#8a8886"/><path d="M1 2H13L9 7V12H6V7Z" fill="#fff" stroke="#555" stroke-width="1.300"/></g>
<g transform="translate(1662,458)"><rect class="kw" x="-11" y="-11" width="22" height="22"/><rect x="-11" y="-11" width="22" height="4" fill="#8a8886"/><path d="M-11-2H11M-11 4H11M-4-7V11M4-7V11" stroke="#8a8886"/></g>

<g transform="translate(1428,493)"><rect class="kw" x="-11" y="-11" width="22" height="22"/><rect x="-11" y="-11" width="22" height="4" fill="#8a8886"/><rect x="-11" y="1" width="22" height="10" fill="#7ab6ea"/><rect x="-4" y="-7" width="7" height="18" fill="#7ab6ea"/><path d="M-11-3H11M-11 5H11M-4-7V11M4-7V11" stroke="#fff"/></g>
<text x="1467" y="503" font-size="24" font-weight="bold" text-anchor="middle" style="fill:#2a86c6" textLength="16" lengthAdjust="spacingAndGlyphs">R</text>
<text x="1506" y="503" font-size="25" font-weight="bold" text-anchor="middle" style="fill:#2a86c6" textLength="24" lengthAdjust="spacingAndGlyphs">Py</text>
<g transform="translate(1545,493)"><path class="k" d="M-11-12V11H12"/><path d="M-11-6H2" stroke="#1f77bd" stroke-width="1.500"/><circle cx="6" cy="-7" r="3.500" fill="#7ab6ea" stroke="#1f77bd"/><path d="M-11 1H-1" stroke="#888" stroke-width="1.200"/><circle cx="0" cy="1" r="2" fill="#888"/><path d="M-11 5H-5" stroke="#888" stroke-width="1.200"/><circle cx="-4" cy="5" r="2" fill="#888"/></g>
<g transform="translate(1584,493)"><rect class="b" x="-11" y="-3" width="8" height="6"/><path class="k" d="M-3 0H1M1-8V8M1-8H4M1 0H4M1 8H4"/><rect class="b" x="4" y="-11" width="7" height="6"/><rect class="b" x="4" y="-3" width="7" height="6"/><rect class="b" x="4" y="5" width="7" height="6"/></g>
<g transform="translate(1623,493)"><path d="M-11-10H11V6H-3L-6 11V6H-11Z" fill="#fff" stroke="#1f77bd" stroke-width="1.600"/></g>
<g transform="translate(1662,493)"><path d="M-7-11H5L11-5V11H-7V-3" fill="#fff" stroke="#555" stroke-width="1.300"/><circle cx="-7" cy="-3" r="2.500" fill="#7ab6ea" stroke="#1f77bd"/><path d="M-2-3H6M-2 2H7" stroke="#1f77bd" stroke-width="1.300"/><path d="M5-11V-5H11" class="k"/></g>

<g transform="translate(1428,528)"><path d="M-7-11H7V-1C7 3 3 5 0 5C-3 5-7 3-7-1Z" fill="#fff" stroke="#333" stroke-width="1.500"/><rect x="-7" y="-11" width="14" height="4" fill="#2a86c6"/><path class="k" style="stroke:#333" d="M-7-8H-11V-4C-11-1-9 0-7 1M7-8H11V-4C11-1 9 0 7 1M0 5V8"/><rect x="-5" y="8" width="10" height="4" fill="#2a86c6"/></g>
<g transform="translate(1467,528)"><path d="M-9-11H4L10-5V11H-9Z" fill="#f3f2f1" stroke="#444" stroke-width="1.800"/><path d="M4-11V-5H10" class="k"/><rect x="-5" y="3" width="3" height="5" fill="#333"/><rect x="0" y="-1" width="3" height="9" fill="#333"/><rect x="5" y="3" width="3" height="5" fill="#333"/></g>
<g transform="translate(1506,528)"><rect x="-10" y="-6" width="22" height="16" fill="#fff" stroke="#555" stroke-width="1.200"/><text x="1" y="6" font-size="11.500" text-anchor="middle" style="fill:#2a86c6">123</text><path d="M-6-13H2L-3-6H1L-11 4L-8-5H-12Z" fill="#f9b233" stroke="#d16a10" stroke-width="1"/></g>
<g transform="translate(1545,528)"><rect x="-4" y="-11" width="9" height="9" fill="#f3f2f1" stroke="#999"/><rect x="-10" y="1" width="9" height="9" fill="#f3f2f1" stroke="#999"/><rect x="-10" y="-8" width="8" height="7" fill="#7ab6ea" stroke="#1f77bd"/><path d="M-7-13H0L-4-7H-1L-11 1L-9-6H-12Z" fill="#f9b233" stroke="#d16a10" stroke-width="1"/><path d="M0 0H13L9 5V12H5V5Z" fill="#fff" stroke="#333" stroke-width="1.400"/></g>
<g transform="translate(1584,528)"><rect x="-11" y="-11" width="22" height="22" fill="#fff" stroke="#1f77bd" stroke-width="1.500"/><path d="M-5 11L0 2L4-1L7-11H11V-3L6 3L3 11Z" fill="#7ab6ea" stroke="#1f77bd"/><path d="M-14-13H-7V-5L-10.500 0L-14-5Z" fill="#d9731f"/><circle cx="-10.500" cy="-8" r="1.500" fill="#fff"/><circle cx="7" cy="9" r="4" fill="#d9731f"/><circle cx="12" cy="1" r="2" fill="#d9731f"/></g>
<g transform="translate(1623,528)" fill="none" stroke="#9b4ab5" stroke-width="1.500"><path d="M0-11L11 0L3 8L-5 0Z"/><path d="M0-11L-11 0L0 11L8 4"/><path d="M-5 0L3-8M-3 3L3 9"/></g>
<g transform="translate(1662,528)" fill="#fff" stroke="#2a86c6" stroke-width="1.500"><path d="M-11-9H5L12 0L5 9H-11L-4 0Z"/><path d="M-3 3L4-6M1 4L6-2" fill="none"/></g>
<g fill="#252423"><rect x="1420" y="560" width="3" height="2.500"/><rect x="1428" y="560" width="3" height="2.500"/><rect x="1436" y="560" width="3" height="2.500"/></g>

<rect x="1403" y="586" width="287" height="1" fill="#dedcda"/>

<!-- wells -->
<text class="w" x="1417" y="613">Legend</text>
<rect x="1407.500" y="624.500" width="274.500" height="44" fill="#fff" stroke="#c8c6c4" stroke-dasharray="3 2"/>
<rect x="1410.500" y="629.500" width="267" height="27" rx="2" fill="#edebe9" stroke="#c8c6c4"/>
<text class="w" x="1416" y="649" textLength="139" lengthAdjust="spacingAndGlyphs">Column1.Area_Name</text>
<path d="M1640 639L1646.500 645L1653 639M1662 639L1672 648M1672 639L1662 648" fill="none" stroke="#484644" stroke-width="1.100"/>
<text class="w" x="1417" y="697">Values</text>
<rect x="1407.500" y="709.500" width="274.500" height="43" fill="#fff" stroke="#c8c6c4" stroke-dasharray="3 2"/>
<rect x="1410.500" y="713.500" width="267" height="27" rx="2" fill="#edebe9" stroke="#c8c6c4"/>
<text class="w" x="1416" y="733" textLength="186" lengthAdjust="spacingAndGlyphs">Count of Column1.Part_Cost</text>
<path d="M1640 724L1646.500 730L1653 724M1662 724L1672 733M1672 724L1662 733" fill="none" stroke="#484644" stroke-width="1.100"/>
<text class="w" x="1417" y="782">Details</text>
<rect x="1407.500" y="793.500" width="274.500" height="33.500" fill="#fff" stroke="#c8c6c4" stroke-dasharray="3 2"/>
<text class="w" x="1420" y="816" textLength="133" lengthAdjust="spacingAndGlyphs">Add data fields here</text>
<text class="w" x="1417" y="857">Tooltips</text>
<rect x="1407.500" y="868.500" width="274.500" height="34" fill="#fff" stroke="#c8c6c4" stroke-dasharray="3 2"/>
<text class="w" x="1420" y="891" textLength="133" lengthAdjust="spacingAndGlyphs">Add data fields here</text>
<text x="1417" y="932" font-size="14" font-weight="bold" style="fill:#484644" textLength="86" lengthAdjust="spacingAndGlyphs">Drill through</text>
<text class="w" x="1417" y="963" textLength="82" lengthAdjust="spacingAndGlyphs">Cross-report</text>
<rect x="1622.500" y="948.500" width="39.500" height="19.500" rx="9.700" fill="#fff" stroke="#8a8886"/>
<circle cx="1632.700" cy="958" r="5" fill="#605e5c"/>
<text x="1640" y="962.500" font-size="11" style="fill:#8a8886">Off</text>
<text class="w" x="1417" y="997" textLength="92" lengthAdjust="spacingAndGlyphs">Keep all filters</text>
<rect x="1622" y="982" width="40" height="20" rx="10" fill="#117865"/><circle cx="1652" cy="992" r="5.500" fill="#fff"/>
<rect x="1403" y="989" width="287" height="11" fill="#f3f2f1"/>
<rect x="1682.500" y="590" width="6" height="345" rx="3" fill="#8a8886"/>

<!-- data panel -->
<text x="1701" y="231" font-size="18.400" font-weight="bold" style="fill:#252423">Data</text>
<path d="M1945.500 217L1952.500 224.500L1945.500 232M1952.500 217L1959.500 224.500L1952.500 232" fill="none" stroke="#252423" stroke-width="1.400"/>
<rect x="1696" y="257" width="268" height="30" rx="3" fill="#fff" stroke="#e1dfdd"/>
<rect x="1696" y="286" width="268" height="1.300" fill="#605e5c"/>
<circle cx="1718.500" cy="271" r="6.800" fill="none" stroke="#484644" stroke-width="1.200"/><path d="M1723.500 276L1728.500 281" stroke="#484644" stroke-width="1.300"/>
<text x="1738" y="279" font-size="16.500" style="fill:#605e5c" textLength="50" lengthAdjust="spacingAndGlyphs">Search</text>
<path d="M1707.500 311L1714 317.500L1720.500 311" fill="none" stroke="#484644" stroke-width="1.100"/>
<g fill="none" stroke="#484644" stroke-width="1.300"><rect x="1727" y="306" width="15" height="14" rx="2"/><path d="M1727 311H1742M1727 316H1742M1732 306V320M1737 306V320"/></g>
<circle cx="1741.500" cy="321" r="7" fill="#117865"/><path d="M1738.500 321L1740.700 323.200L1744.500 319" fill="none" stroke="#fff" stroke-width="1.400"/>
<text x="1750" y="319" font-size="14.700" style="fill:#3b3a39" textLength="67.500" lengthAdjust="spacingAndGlyphs">Estimating</text>
<rect x="1955" y="297" width="10" height="262" fill="#7f7f7f"/>

<g fill="none" stroke="#8a8886" stroke-width="1">
<rect x="1746" y="336" width="14" height="14.500" rx="2"/><rect x="1746" y="396" width="14" height="14.500" rx="2"/><rect x="1746" y="426" width="14" height="14.500" rx="2"/><rect x="1746" y="456" width="14" height="14.500" rx="2"/><rect x="1746" y="486" width="14" height="14.500" rx="2"/><rect x="1746" y="516" width="14" height="14.500" rx="2"/><rect x="1746" y="546" width="14" height="14.500" rx="2"/><rect x="1746" y="576" width="14" height="14.500" rx="2"/><rect x="1746" y="606" width="14" height="14.500" rx="2"/><rect x="1746" y="636" width="14" height="14.500" rx="2"/><rect x="1746" y="666" width="14" height="14.500" rx="2"/><rect x="1746" y="696" width="14" height="14.500" rx="2"/><rect x="1746" y="726" width="14" height="14.500" rx="2"/><rect x="1746" y="756" width="14" height="14.500" rx="2"/><rect x="1746" y="786" width="14" height="14.500" rx="2"/><rect x="1746" y="816" width="14" height="14.500" rx="2"/><rect x="1746" y="846" width="14" height="14.500" rx="2"/><rect x="1746" y="876" width="14" height="14.500" rx="2"/><rect x="1746" y="906" width="14" height="14.500" rx="2"/><rect x="1746" y="936" width="14" height="14.500" rx="2"/><rect x="1746" y="966" width="14" height="14.500" rx="2"/>
</g>
<rect x="1745.500" y="365.500" width="15" height="15.500" rx="2" fill="#117865"/><path d="M1749 373.500L1752 376.500L1757.500 370" fill="none" stroke="#fff" stroke-width="1.500"/>
<text class="d" x="1793" y="348.300">Column1.ApplicationN...</text>
<text class="d" x="1793" y="378.300">Column1.Area_Name</text>
<text class="d" x="1793" y="408.300">Column1.AreaSort</text>
<text class="d" x="1793" y="438.300">Column1.Bid_Status</text>
<text class="d" x="1793" y="468.300">Column1.CostFlag</text>
<text class="d" x="1793" y="498.300">Column1.Estdetailid</text>
<text class="d" x="1793" y="528.300">Column1.Estimate_Date</text>
<text class="d" x="1793" y="558.300">Column1.Estimate_Id</text>
<text class="d" x="1793" y="588.300">Column1.Estimate_Na...</text>
<text class="d" x="1793" y="618.300">Column1.Estimate_Year</text>
<text class="d" x="1793" y="648.300">Column1.Expense_Cost</text>
<text class="d" x="1793" y="678.300">Column1.Freight</text>
<text class="d" x="1793" y="708.300">Column1.Freight_Cost</text>
<text class="d" x="1793" y="738.300">Column1.Freight_Cost1</text>
<text class="d" x="1793" y="768.300">Column1.Is_Unique</text>
<text class="d" x="1793" y="798.300">Column1.IsUnique</text>
<text class="d" x="1793" y="828.300">Column1.Labor_Risk</text>
<text class="d" x="1793" y="858.300">Column1.LaborRisk_C...</text>
<text class="d" x="1793" y="888.300">Column1.LaborRisk_C...</text>
<text class="d" x="1793" y="918.300">Column1.Line_Cost</text>
<text class="d" x="1793" y="948.300">Column1.Name</text>
<text class="d" x="1793" y="978.300">Column1.Object_Type</text>
</svg>
</body></html>
